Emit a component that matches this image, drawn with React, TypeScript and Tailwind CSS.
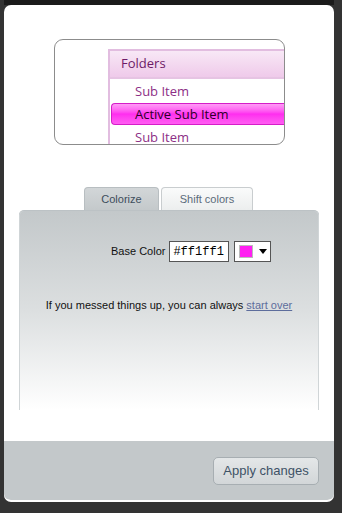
const sans = { fontFamily: '"Liberation Sans", Arial, sans-serif' };

function MenuPreview() {
  return (
    <div className="ml-[50px] mt-[34px] h-[106px] w-[231px] overflow-hidden rounded-[9px] border border-[#8c8c8c] bg-white">
      <div className="ml-[53px] mt-[9px] border-l-2 border-t-2 border-[#e2bde0]" style={{ fontFamily: '"Open Sans", "Noto Sans", sans-serif' }}>
        <div className="flex h-[28px] items-center border-b-2 border-[#e6c4e3] bg-gradient-to-b from-[#f8e8f6] to-[#efcaea] pl-[11px] text-[13px] text-[#6e1a67]">
          Folders
        </div>
        <div className="flex h-[24px] items-center pl-[25px] pt-[1px] text-[13px] text-[#8d2f86]">Sub Item</div>
        <div className="ml-[1px] flex h-[22px] items-center rounded-l-[4px] border border-r-0 border-[#d51dc8] bg-gradient-to-b from-[#ff9af6] via-[#ff2cef] to-[#ff5cf2] pl-[23px] pt-[1px] text-[13px] text-[#2d0028]">
          Active Sub Item
        </div>
        <div className="flex h-[26px] items-center pl-[25px] text-[13px] text-[#8d2f86]">Sub Item</div>
      </div>
    </div>
  );
}

function Tabs() {
  return (
    <div className="mt-[42px] flex items-end gap-[2px] pl-[80px]" style={sans}>
      <div className="flex h-[23px] w-[75px] items-center justify-center rounded-t-[4px] border border-b-0 border-[#b8bec1] bg-gradient-to-b from-[#d2d6d8] to-[#c4c9cb] text-[11px] text-[#3d4d5c]">
        Colorize
      </div>
      <div className="flex h-[23px] w-[92px] items-center justify-center rounded-t-[4px] border border-b-0 border-[#c9cdcf] bg-gradient-to-b from-[#fafbfb] to-[#eceeee] text-[11px] text-[#5b6b7a]">
        Shift colors
      </div>
    </div>
  );
}

function ColorPanel() {
  return (
    <div className="mx-[15px] h-[200px] rounded-t-[5px] border-t border-[#bcc2c5] bg-gradient-to-b from-[#c3c8ca] via-[#dcdfe0] to-white shadow-[inset_1px_0_0_#d0d5d7,inset_-1px_0_0_#d0d5d7]" style={sans}>
      <div className="mt-[30px] flex items-center pl-[92px]">
        <span className="text-[11px] text-[#111]">Base Color</span>
        <div className="ml-[4px] flex h-[21px] w-[60px] items-center border border-[#555] bg-white pl-[3px] text-[12px] text-black" style={{ fontFamily: '"Liberation Mono", "Courier New", monospace' }}>
          #ff1ff1
        </div>
        <div className="ml-[5px] flex h-[21px] w-[37px] items-center border border-[#555] bg-white pl-[4px]">
          <div className="h-[13px] w-[14px] border border-[#bbb] bg-[#ff1ff1]" />
          <svg width="8" height="5" viewBox="0 0 8 5" className="ml-[6px]">
            <path d="M0 0h8L4 5z" fill="#000" />
          </svg>
        </div>
      </div>
      <p className="mt-[35px] text-center text-[11px] text-[#111]">
        If you messed things up, you can always{" "}
        <span className="text-[#5d6d9c] underline">start over</span>
      </p>
    </div>
  );
}

export default function App() {
  return (
    <div className="h-[513px] w-[342px] bg-[#333] pb-[11px] pl-[4px] pr-[8px] pt-[5px]">
      <div className="-mt-[5px] h-[5px] bg-[#1b1b1b]" />
      <div className="flex h-[497px] flex-col overflow-hidden rounded-[7px] border-b-2 border-white bg-white">
        <MenuPreview />
        <Tabs />
        <ColorPanel />
        <div className="mt-auto flex h-[59px] items-start justify-end rounded-b-[6px] bg-[#c3c8ca] pr-[15px] pt-[16px]" style={sans}>
          <button className="h-[28px] w-[106px] rounded-[5px] border border-[#a7aeb2] bg-gradient-to-b from-[#e4e7e8] to-[#d2d6d8] text-[13px] text-[#3e5266]">
            Apply changes
          </button>
        </div>
      </div>
    </div>
  );
}
